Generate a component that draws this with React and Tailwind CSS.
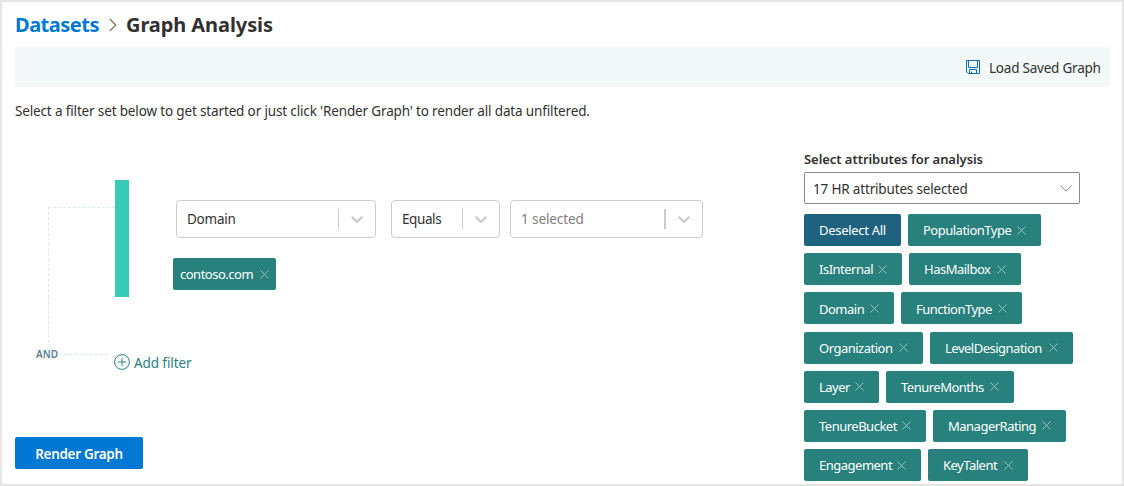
import React from "react";

const chipRows = [
  [["PopulationType", "w-[133px]"]],
  [["IsInternal", "w-[98px]"], ["HasMailbox", "w-[112px]"]],
  [["Domain", "w-[90px]"], ["FunctionType", "w-[121px]"]],
  [["Organization", "w-[119px]"], ["LevelDesignation", "w-[143px]"]],
  [["Layer", "w-[75px]"], ["TenureMonths", "w-[128px]"]],
  [["TenureBucket", "w-[122px]"], ["ManagerRating", "w-[133px]"]],
  [["Engagement", "w-[117px]"], ["KeyTalent", "w-[100px]"]],
];

function Cross() {
  return (
    <svg className="size-[9px] shrink-0" viewBox="0 0 9 9" fill="none" stroke="#9ccac6" strokeWidth="0.9">
      <path d="M0.5 0.5 L8.5 8.5 M8.5 0.5 L0.5 8.5" />
    </svg>
  );
}

function Chip({ label, width }) {
  return (
    <button className={`flex h-8 items-center justify-between rounded-[2px] bg-[#28817d] pl-[15px] pr-[15.5px] text-[13px] tracking-[-0.5px] text-white ${width}`}>
      <span className="pt-[2px]">{label}</span>
      <Cross />
    </button>
  );
}

function FilterSelect({ label, className, labelClass, barClass }) {
  return (
    <div className={`flex h-[38px] items-center rounded-[4px] border border-[#cccccc] pl-[10px] text-[13.5px] ${className}`}>
      <span className={`flex-1 ${labelClass}`}>{label}</span>
      <span className={`h-5 bg-[#cccccc] ${barClass}`} />
      <span className="flex w-9 justify-center">
        <svg className="size-5" viewBox="0 0 20 20" fill="#cccccc">
          <path d="M4.516 7.548c0.436-0.446 1.043-0.481 1.576 0l3.908 3.747 3.908-3.747c0.533-0.481 1.141-0.446 1.574 0 0.436 0.445 0.408 1.197 0 1.615-0.406 0.418-4.695 4.502-4.695 4.502-0.217 0.223-0.502 0.335-0.787 0.335s-0.57-0.112-0.789-0.335c0 0-4.287-4.084-4.695-4.502s-0.436-1.17 0-1.615z" />
        </svg>
      </span>
    </div>
  );
}

export default function App() {
  return (
    <div className="h-[486px] w-[1124px] overflow-hidden border-2 border-[#e5e5e5] bg-white pl-[13px] pr-3 font-['Noto_Sans',sans-serif] text-[#323130]">
      <h1 className="flex h-[45px] items-center text-[20px] font-bold leading-none">
        <span className="w-[84px] whitespace-nowrap tracking-[-0.5px] text-[#0078d4]">Datasets</span>
        <svg className="ml-[10px] h-[14px] w-[8px]" viewBox="0 0 8 14" fill="none" stroke="#7a6a58" strokeWidth="1.1">
          <path d="M0.8 1 L6.8 7 L0.8 13" />
        </svg>
        <span className="ml-[9px] whitespace-nowrap tracking-[-0.08px]">Graph Analysis</span>
      </h1>

      <div className="flex h-10 items-center justify-end bg-[#f3f8f8] pr-[9px] text-[13.5px]">
        <svg className="mr-[9px] h-[14px] w-[14px]" viewBox="0 0 14 14" fill="none" stroke="#0f6cbd" strokeWidth="1">
          <path d="M0.5 0.5 H13.5 V13.5 H2 L0.5 12 Z M2.5 0.5 V7.5 H11.5 V0.5 M3.5 13.5 V9.5 H10.5 V13.5 M5.5 11.5 V13.5" />
        </svg>
        <span className="w-[112px] whitespace-nowrap pt-[2px] tracking-[-0.22px]">Load Saved Graph</span>
      </div>

      <p className="mt-[14px] h-5 whitespace-nowrap text-[13.5px] leading-5 tracking-[-0.15px]">
        Select a filter set below to get started or just click 'Render Graph' to render all data unfiltered.
      </p>

      <div className="flex">
        <main className="w-[789px] pt-[59px]">
          <div className="flex h-[117px]">
            <div className="ml-[33px] mt-[27px] w-[67px] border-l border-t border-dashed border-[#dcebee]" />
            <div className="w-[14px] bg-[#38ccb6]" />
            <div className="ml-[44px] pt-5">
              <div className="ml-[3px] flex">
                <FilterSelect label="Domain" className="w-[200px]" labelClass="tracking-[-0.25px]" barClass="w-px" />
                <FilterSelect label="Equals" className="ml-[15px] w-[109px]" labelClass="tracking-[-0.4px]" barClass="w-px" />
                <FilterSelect label="1 selected" className="ml-[10px] w-[193px]" labelClass="tracking-[-0.1px] text-[#808080]" barClass="w-[2px]" />
              </div>
              <button className="mt-5 flex h-8 w-[103px] items-center justify-between rounded-[2px] bg-[#28817d] px-[7px] text-[13px] tracking-[-0.5px] text-white">
                <span className="pt-px">contoso.com</span>
                <Cross />
              </button>
            </div>
          </div>
          <div className="ml-[33px] h-[46px] w-px border-l border-dashed border-[#dcebee]" />
          <div className="flex h-[40px]">
            <span className="ml-[21px] w-[28px] pt-[5px] text-[10px] font-semibold leading-[12px] text-[#5b7f91]">AND</span>
            <div className="mt-[11px] h-px w-[44px] border-t border-dashed border-[#d5e6f0]" />
            <button className="ml-[6px] flex h-[38px] items-center text-[13.5px] text-[#28817d]">
              <svg className="mr-[4px] size-4" viewBox="0 0 16 16" fill="none" stroke="#28817d">
                <circle cx="8" cy="8" r="7.4" />
                <path d="M8 4 V12 M4 8 H12" />
              </svg>
              <span className="whitespace-nowrap pt-[2px] tracking-[-0.1px]">Add filter</span>
            </button>
          </div>
          <button className="mt-[54px] flex h-8 w-32 items-center justify-center rounded-[2px] bg-[#0078d4] text-[13.5px] font-semibold text-white">
            <span className="whitespace-nowrap pt-[2px] tracking-[-0.3px]">Render Graph</span>
          </button>
        </main>

        <aside className="w-[276px] pt-[28px]">
          <h2 className="h-[23px] whitespace-nowrap text-[13px] font-semibold leading-5 tracking-[-0.05px]">Select attributes for analysis</h2>
          <div className="flex h-8 items-center justify-between rounded-[2px] border border-[#8a8886] pl-[8px] pr-[7px] text-[13.5px]">
            <span className="whitespace-nowrap pt-[2px] tracking-[-0.17px]">17 HR attributes selected</span>
            <svg className="h-[7px] w-3" viewBox="0 0 12 7" fill="none" stroke="#85888c" strokeWidth="1">
              <path d="M0.5 0.7 L6 6.2 L11.5 0.7" />
            </svg>
          </div>
          <div className="mt-[10px] flex flex-col gap-[7.2px]">
            {chipRows.map((row, i) => (
              <div key={i} className="flex gap-[7px]">
                {i === 0 && (
                  <button className="h-8 w-[97px] rounded-[2px] bg-[#1f6280] px-[15px] pt-[2px] text-left text-[13px] tracking-[-0.3px] whitespace-nowrap text-white">
                    Deselect All
                  </button>
                )}
                {row.map(([label, width]) => (
                  <Chip key={label} label={label} width={width} />
                ))}
              </div>
            ))}
          </div>
        </aside>
      </div>
    </div>
  );
}
